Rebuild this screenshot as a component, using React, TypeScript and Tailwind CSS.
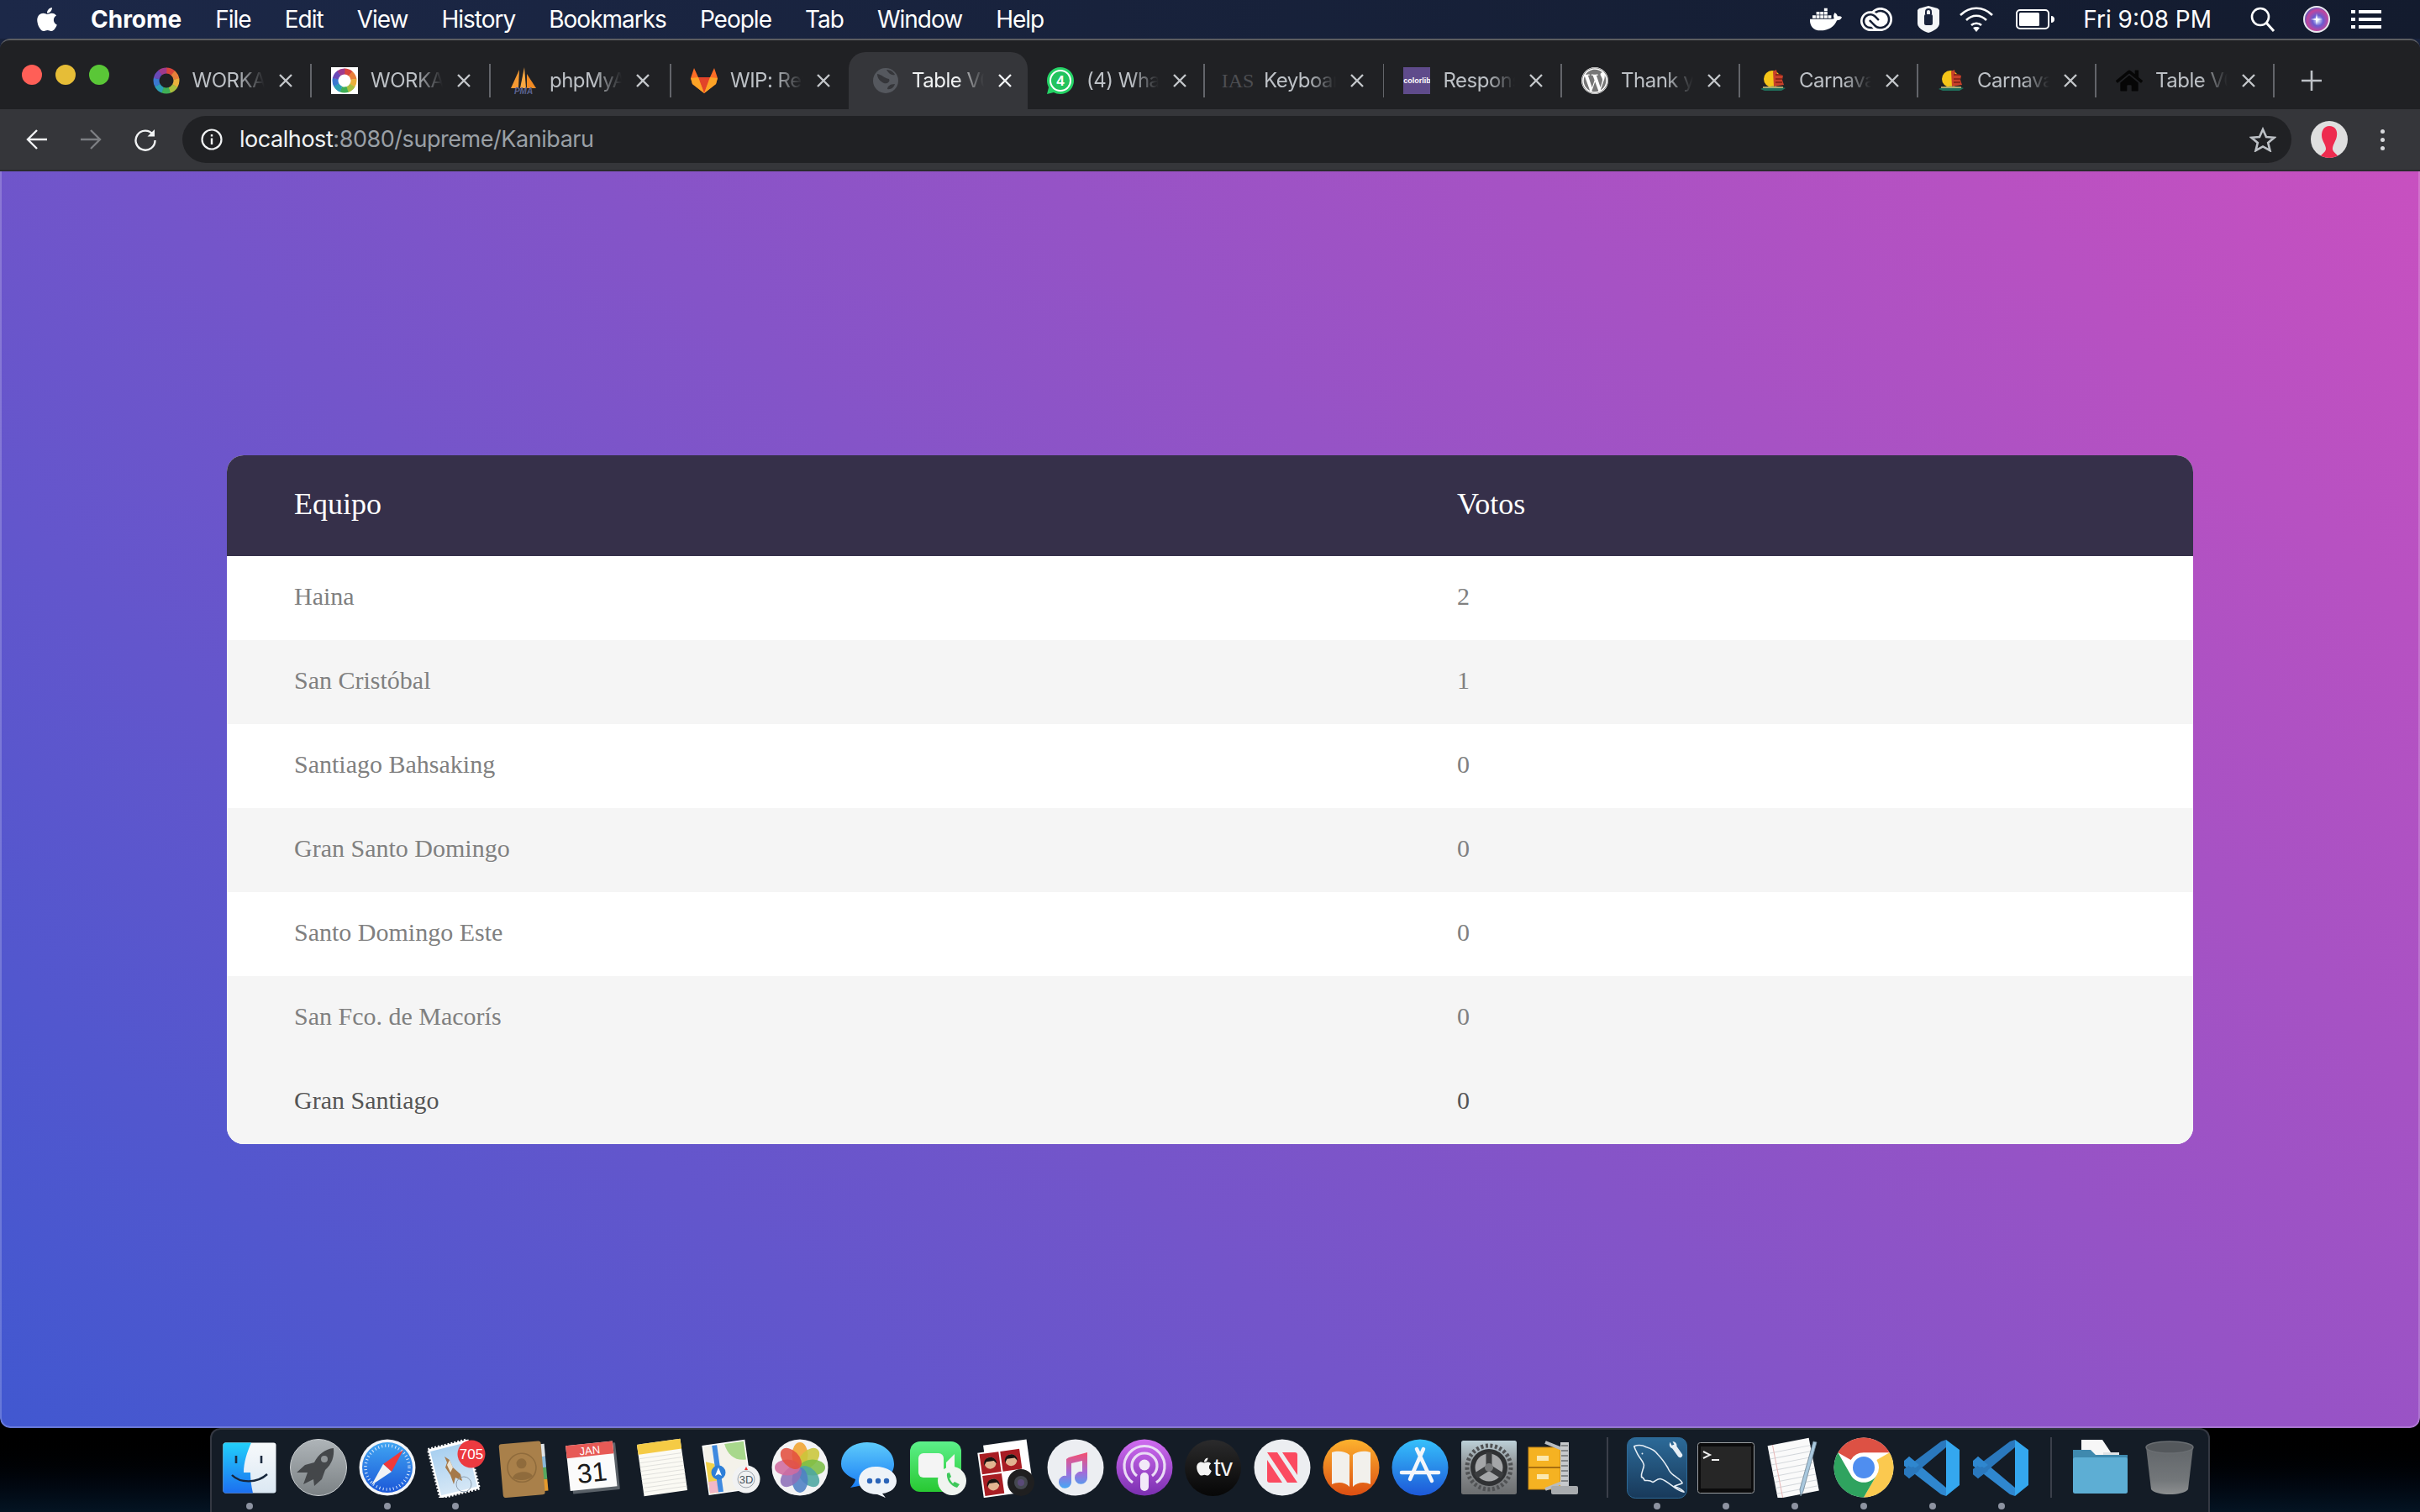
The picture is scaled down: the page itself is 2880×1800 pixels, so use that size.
import React from "react";
import { FaApple, FaDocker, FaHome, FaWordpress } from "react-icons/fa";
import { SiAdobecreativecloud } from "react-icons/si";

const rows: [string, string][] = [
  ["Haina", "2"],
  ["San Cristóbal", "1"],
  ["Santiago Bahsaking", "0"],
  ["Gran Santo Domingo", "0"],
  ["Santo Domingo Este", "0"],
  ["San Fco. de Macorís", "0"],
  ["Gran Santiago", "0"],
];

function Ring({ colors, r = 12, w = 7 }: { colors: string[]; r?: number; w?: number }) {
  const c = 2 * Math.PI * r;
  const seg = c / colors.length;
  return (
    <g transform="rotate(-90 16 16)">
      {colors.map((col, i) => (
        <circle key={i} cx="16" cy="16" r={r} fill="none" stroke={col} strokeWidth={w} strokeDasharray={`${seg + 0.4} ${c - seg - 0.4}`} strokeDashoffset={-seg * i} />
      ))}
    </g>
  );
}
const ringColors = ["#d9453a", "#e8803a", "#eab13c", "#a8bf3f", "#3fae55", "#2d9fb4", "#3a78d0", "#6a4ab8", "#a03a8c"];

function Fav({ n }: { n: number }) {
  const p = { width: 32, height: 32, viewBox: "0 0 32 32" };
  switch (n) {
    case 0:
      return <svg {...p}><Ring colors={ringColors} /></svg>;
    case 1:
      return <svg {...p}><rect width="32" height="32" fill="#fff" /><Ring colors={ringColors} r={11} w={7} /></svg>;
    case 2:
      return (
        <svg {...p}>
          <path d="M1 25 L11 3 L10 25 Z" fill="#f59a33" />
          <path d="M12 25 L17 0 L19 25 Z" fill="#f8a742" />
          <path d="M20 25 L20 8 L31 25 Z" fill="#f08a24" />
          <text x="16" y="32" textAnchor="middle" fontSize="10" fontWeight="700" fontStyle="italic" fill="#5b6391" fontFamily="Liberation Sans, sans-serif">PMA</text>
        </svg>
      );
    case 3:
      return (
        <svg {...p}>
          <path d="M16 31 L2 20 L0 13 L4 1 L9 12 L23 12 L28 1 L32 13 L30 20 Z" fill="#fc6d26" />
          <path d="M16 31 L9 12 L23 12 Z" fill="#e24329" />
          <path d="M16 31 L2 20 L0 13 L9 12 Z" fill="#fca326" />
          <path d="M16 31 L30 20 L32 13 L23 12 Z" fill="#fca326" />
        </svg>
      );
    case 4:
      return (
        <svg {...p}>
          <circle cx="16" cy="16" r="15" fill="#55585e" />
          <path d="M6 8 C12 9 14 13 20 14 C22 18 17 20 14 19 C10 17 6 14 6 8 Z M18 26 C18 23 21 20 27 20 C26 24 22 27 18 26 Z M17 3 C21 3 25 5 27 9 C23 10 20 8 17 3 Z" fill="#35363a" />
        </svg>
      );
    case 5:
      return (
        <svg {...p}>
          <path d="M16 0 C25 0 32 7 32 16 C32 25 25 32 16 32 C13 32 10 31 8 30 L0 32 L2 24 C1 22 0 19 0 16 C0 7 7 0 16 0 Z" fill="#25d366" />
          <circle cx="16" cy="16" r="13" fill="#fff" />
          <circle cx="16" cy="16" r="11" fill="#22c35e" />
          <text x="16" y="22" textAnchor="middle" fontSize="17" fontWeight="700" fill="#fff" fontFamily="Liberation Sans, sans-serif">4</text>
        </svg>
      );
    case 6:
      return <span className="font-['Liberation_Serif',serif] text-[24px] leading-8 text-[#4d4e52]">IAS</span>;
    case 7:
      return (
        <span className="flex h-8 w-8 items-center justify-center overflow-hidden bg-[#5f4b8b] font-['Liberation_Sans',sans-serif] text-[9px] font-bold leading-none text-white">colorlib</span>
      );
    case 8:
      return (
        <span className="flex h-8 w-8 items-center justify-center rounded-full bg-white">
          <FaWordpress size={32} color="#777" />
        </span>
      );
    case 9:
    case 10:
      return (
        <svg {...p}>
          <circle cx="15" cy="14" r="10" fill="#f5c518" />
          <path d="M16 5 L20 3 L21 8 L28 10 L27 15 L29 21 L17 23 Z" fill="#c8402a" />
          <path d="M19 9 h7 M19 14 h8 M19 18 h8" stroke="#7a2015" strokeWidth="1.6" />
          <path d="M1 26 C8 22 24 22 31 25 L26 28 L6 28 Z" fill="#1f6d5a" />
          <path d="M4 24 L28 24" stroke="#d8c27a" strokeWidth="1.5" />
        </svg>
      );
    default:
      return <FaHome size={32} color="#060606" />;
  }
}

const tabs = ["WORKAREA", "WORKAREA", "phpMyAdmin", "WIP: Refactor", "Table V01", "(4) WhatsApp", "Keyboard", "Responsive", "Thank you", "Carnaval", "Carnaval", "Table V01"];
const tabWidths = [212.4, 213, 215, 211, 213, 211, 213.5, 211.5, 212, 212, 212, 212];

function CloseX({ active }: { active: boolean }) {
  return (
    <svg width="18" height="18" viewBox="0 0 18 18" className="shrink-0">
      <path d="M2 2 L16 16 M16 2 L2 16" stroke={active ? "#f1f3f4" : "#c4c7cb"} strokeWidth="2.4" />
    </svg>
  );
}

function Tab({ i }: { i: number }) {
  const active = i === 4;
  const hideSep = i === 3 || i === 4;
  return (
    <div style={{ width: tabWidths[i] }} className={`flex h-full shrink-0 items-center ${active ? "rounded-t-[20px] bg-[#35363a]" : ""}`}>
      <div className={`flex items-center ${active ? "pl-[28px]" : "pl-[23px]"}`}>
        <div className="flex h-8 w-8 shrink-0 items-center justify-center">
          <Fav n={i} />
        </div>
        <div className={`ml-[15px] w-[86px] overflow-hidden whitespace-nowrap text-[24px] leading-8 tracking-[-0.5px] [mask-image:linear-gradient(to_right,#000_62%,transparent_100%)] ${active ? "text-[#f1f3f4]" : "text-[#bdc1c6]"}`}>
          {tabs[i]}
        </div>
        <div className="ml-[16px]">
          <CloseX active={active} />
        </div>
      </div>
      <div className={`ml-auto h-10 w-[1.5px] shrink-0 ${hideSep ? "" : "bg-[#63656a]"}`} />
    </div>
  );
}

function MenuIcons() {
  return (
    <div className="flex items-center">
      <FaDocker size={38} color="#fff" />
      <span className="ml-[22px] flex"><SiAdobecreativecloud size={38} color="#fff" /></span>
      <svg className="ml-[28px]" width="30" height="34" viewBox="0 0 30 34">
        <path d="M15 1 L26 4 L28 6 V22 C28 27 21 31 15 33 C9 31 2 27 2 22 V6 L4 4 Z" fill="#f4f6f8" />
        <rect x="10" y="11" width="10" height="13" rx="2" fill="#19233b" />
        <path d="M12 11 V8 a3 3 0 0 1 6 0 V11" stroke="#19233b" strokeWidth="2" fill="none" />
      </svg>
      <svg className="ml-[21px]" width="42" height="30" viewBox="0 0 42 30">
        <path d="M2 10 C13 -1 29 -1 40 10 M9 16 C16 9 26 9 33 16 M15 22 C18 19 24 19 27 22" stroke="#fff" strokeWidth="2.6" fill="none" />
        <path d="M21 30 L17 25 C19 23.5 23 23.5 25 25 Z" fill="#fff" />
      </svg>
      <svg className="ml-[26px]" width="46" height="24" viewBox="0 0 46 24">
        <rect x="1" y="1" width="38" height="22" rx="4" fill="none" stroke="#fff" strokeWidth="2" />
        <rect x="4" y="4" width="24" height="16" rx="1.5" fill="#fff" />
        <path d="M42 8 C45 8 46 10 46 12 C46 14 45 16 42 16 Z" fill="#fff" />
      </svg>
      <span className="ml-[34px] text-[28px] leading-none text-white">Fri 9:08 PM</span>
      <svg className="ml-[46px]" width="30" height="30" viewBox="0 0 30 30">
        <circle cx="12" cy="12" r="10" fill="none" stroke="#fff" strokeWidth="2.6" />
        <path d="M19 19 L28 29" stroke="#fff" strokeWidth="3" />
      </svg>
      <svg className="ml-[33px]" width="32" height="32" viewBox="0 0 32 32">
        <defs>
          <radialGradient id="siri" cx="0.55" cy="0.55" r="0.6">
            <stop offset="0" stopColor="#e0f2ff" /><stop offset="0.35" stopColor="#6a5bd0" /><stop offset="0.7" stopColor="#c2459c" /><stop offset="1" stopColor="#2a5fc8" />
          </radialGradient>
        </defs>
        <circle cx="16" cy="16" r="15" fill="url(#siri)" stroke="#e8e8ee" strokeWidth="2" />
        <path d="M16 9 L17 15 L23 16 L17 17 L16 23 L15 17 L9 16 L15 15 Z" fill="#fff" />
      </svg>
      <svg className="ml-[25px]" width="36" height="22" viewBox="0 0 36 22">
        <path d="M0 0h5v4H0zM9 0h27v4H9zM0 9h5v4H0zM9 9h27v4H9zM0 18h5v4H0zM9 18h27v4H9z" fill="#fff" />
      </svg>
    </div>
  );
}

function Toolbar() {
  return (
    <div className="flex h-[74px] shrink-0 items-center border-b-2 border-[#2a2b2e] bg-[#35363a]">
      <div className="ml-[31px] flex w-[186px] items-center">
        <svg width="26" height="26" viewBox="0 0 26 26">
          <path d="M25 13 H3 M13 2 L2 13 L13 24" stroke="#f1f3f4" strokeWidth="2.4" fill="none" />
        </svg>
        <svg className="ml-[38px]" width="26" height="26" viewBox="0 0 26 26">
          <path d="M1 13 H23 M13 2 L24 13 L13 24" stroke="#7c7e82" strokeWidth="2.4" fill="none" />
        </svg>
        <svg className="ml-[38px]" width="28" height="28" viewBox="0 0 28 28">
          <path d="M23 8 A11.5 11.5 0 1 0 25.5 15" stroke="#f1f3f4" strokeWidth="2.4" fill="none" />
          <path d="M25 2 V10.5 H16.5 Z" fill="#f1f3f4" />
        </svg>
      </div>
      <div className="flex h-14 w-[2510px] items-center rounded-full bg-[#202124]">
        <svg className="ml-[22px]" width="26" height="26" viewBox="0 0 26 26">
          <circle cx="13" cy="13" r="11.5" fill="none" stroke="#f1f3f4" strokeWidth="2.2" />
          <path d="M13 11.5 V19 M13 7 V9.5" stroke="#f1f3f4" strokeWidth="2.4" />
        </svg>
        <span className="ml-[20px] mb-[1px] text-[27px] leading-none tracking-[-0.45px] text-[#f1f3f4]">
          localhost<span className="text-[#9aa0a6]">:8080/supreme/Kanibaru</span>
        </span>
        <svg className="ml-auto mr-[18px]" width="32" height="30" viewBox="0 0 32 30">
          <path d="M16 3 L20 12 L29.5 12.8 L22.2 19 L24.5 28.2 L16 23.4 L7.5 28.2 L9.8 19 L2.5 12.8 L12 12 Z" fill="none" stroke="#bdc1c6" strokeWidth="2.6" />
        </svg>
      </div>
      <div className="ml-[23px] flex h-11 w-11 items-center justify-center overflow-hidden rounded-full bg-[#dfdfdf]">
        <svg width="44" height="44" viewBox="0 0 44 44">
          <path d="M22 6 C29 6 32 11 31 18 C30 24 26 28 26 33 C26 37 30 38 34 44 H10 C14 38 18 37 18 33 C18 28 13 24 13 17 C13 11 16 6 22 6 Z" fill="#ee2b4f" />
        </svg>
      </div>
      <div className="ml-[39px] flex flex-col gap-[5px]">
        <span className="h-[5px] w-[5px] rounded-full bg-[#d7d9dc]" />
        <span className="h-[5px] w-[5px] rounded-full bg-[#d7d9dc]" />
        <span className="h-[5px] w-[5px] rounded-full bg-[#d7d9dc]" />
      </div>
    </div>
  );
}

function Icon({ id }: { id: string }) {
  const p = { width: 72, height: 72, viewBox: "0 0 72 72" };
  const sans = "Liberation Sans, sans-serif";
  switch (id) {
    case "finder":
      return (
        <svg {...p}>
          <defs>
            <linearGradient id="fa" x1="0" y1="0" x2="0" y2="1"><stop offset="0" stopColor="#22d0fb" /><stop offset="1" stopColor="#1c6ff0" /></linearGradient>
            <linearGradient id="fb" x1="0" y1="0" x2="0" y2="1"><stop offset="0" stopColor="#f7f9fb" /><stop offset="1" stopColor="#dbe8f3" /></linearGradient>
          </defs>
          <rect x="4.5" y="6.5" width="63" height="60" rx="3" fill="url(#fb)" />
          <path d="M7.5 6.5 H38 C33 18 29 30 29 42 H37 C37 50 38 58 40 66.5 H7.5 A3 3 0 0 1 4.5 63.5 V9.5 A3 3 0 0 1 7.5 6.5 Z" fill="url(#fa)" />
          <path d="M20 22 v9 M50 22 v9" stroke="#1c2b40" strokeWidth="2.6" />
          <path d="M15 45 C25 55 45 55 57 44" stroke="#16263c" strokeWidth="2.4" fill="none" />
        </svg>
      );
    case "launchpad":
      return (
        <svg {...p}>
          <defs><linearGradient id="lp" x1="0" y1="0" x2="0" y2="1"><stop offset="0" stopColor="#aeb4b8" /><stop offset="1" stopColor="#7c8285" /></linearGradient></defs>
          <circle cx="36" cy="36" r="33.5" fill="url(#lp)" stroke="#c9cdd0" strokeWidth="1" />
          <path d="M54 13 C44 14 36 20 31 30 L20 33 L10 42 L23 42 L18 56 L30 50 L31 58 L40 50 L44 39 C52 32 55 23 54 13 Z" fill="#44474a" />
          <circle cx="43" cy="26" r="4" fill="#8f9497" />
        </svg>
      );
    case "safari":
      return (
        <svg {...p}>
          <defs><linearGradient id="sf" x1="0" y1="0" x2="0" y2="1"><stop offset="0" stopColor="#3fa4f2" /><stop offset="1" stopColor="#1c58d8" /></linearGradient></defs>
          <circle cx="36" cy="36" r="33.5" fill="#f2f4f6" />
          <circle cx="36" cy="36" r="30" fill="url(#sf)" />
          <circle cx="36" cy="36" r="26" fill="none" stroke="#dbe9fb" strokeWidth="3.5" strokeDasharray="1 3.1" />
          <path d="M55 15 L31 32 L41 41 Z" fill="#f0393a" />
          <path d="M17 57 L31 32 L41 41 Z" fill="#f1f3f5" />
        </svg>
      );
    case "mail":
      return (
        <svg {...p}>
          <defs><linearGradient id="ml" x1="0" y1="0" x2="0" y2="1"><stop offset="0" stopColor="#a9d0f0" /><stop offset="1" stopColor="#d5e7f6" /></linearGradient></defs>
          <g transform="rotate(-14 33 38)">
            <rect x="10" y="8" width="48" height="60" fill="#fff" stroke="#fff" strokeWidth="3" strokeDasharray="2 2" />
            <rect x="12" y="11" width="44" height="54" fill="url(#ml)" />
          </g>
          <path d="M23 23 L29 27 L33 36 L42 44 L44 52 L36 48 L34 56 L30 45 L24 36 L26 30 Z" fill="#a5794a" />
          <path d="M29 27 L33 36 L30 42 L26 33 Z" fill="#ece3d2" />
          <circle cx="46" cy="56" r="9" fill="none" stroke="#8e9fb0" strokeWidth="1" />
          <circle cx="55" cy="20" r="16.5" fill="#ec3a40" />
          <text x="55" y="26" textAnchor="middle" fontSize="17" fill="#fff" fontFamily={sans}>705</text>
        </svg>
      );
    case "contacts":
      return (
        <svg {...p}>
          <g transform="rotate(-5 36 36)">
            <rect x="54" y="10" width="8" height="15" fill="#dfe3e6" />
            <rect x="54" y="25" width="8" height="13" fill="#8ab8d8" />
            <rect x="54" y="38" width="8" height="14" fill="#55a860" />
            <rect x="54" y="52" width="8" height="14" fill="#e69a2c" />
            <rect x="8" y="6" width="50" height="64" rx="3" fill="#a9804a" />
            <circle cx="33" cy="36" r="17" fill="none" stroke="#8f6b3c" strokeWidth="1.6" />
            <circle cx="33" cy="31" r="6" fill="#8f6b3c" />
            <path d="M21 47 C24 39 42 39 45 47 C40 52 26 52 21 47 Z" fill="#8f6b3c" />
          </g>
        </svg>
      );
    case "calendar":
      return (
        <svg {...p}>
          <g transform="rotate(-6 36 36)">
            <rect x="9" y="9" width="56" height="56" rx="1" fill="#5a6168" />
            <rect x="6" y="7" width="56" height="54" fill="#fbfbfb" />
            <rect x="6" y="7" width="56" height="15" fill="#e75a56" />
            <text x="34" y="20" textAnchor="middle" fontSize="13" fill="#fff" fontFamily={sans}>JAN</text>
            <text x="34" y="53" textAnchor="middle" fontSize="32" fill="#1a1a1a" fontFamily={sans}>31</text>
          </g>
        </svg>
      );
    case "notes":
      return (
        <svg {...p}>
          <g transform="rotate(-8 36 36)">
            <rect x="10" y="5" width="52" height="62" fill="#fbfaf4" />
            <rect x="10" y="5" width="52" height="12" fill="#f5cb45" />
            <path d="M10 22h52M10 27h52M10 32h52M10 37h52M10 42h52M10 47h52M10 52h52M10 57h52M10 62h52" stroke="#dcdcd8" strokeWidth="0.8" />
          </g>
        </svg>
      );
    case "maps":
      return (
        <svg {...p}>
          <g transform="rotate(-8 30 36)">
            <rect x="6" y="7" width="50" height="58" fill="#f4f2ea" stroke="#fff" strokeWidth="1.5" />
            <path d="M32 8 H55 V30 C42 30 34 22 32 8 Z" fill="#a8d88c" />
            <path d="M7 26 L17 30 V64 H7 Z" fill="#f2d24a" />
            <path d="M7 50 L17 50 V64 H7 Z" fill="#f2b8c8" />
            <rect x="17" y="8" width="6" height="56" fill="#3f8ae0" />
          </g>
          <circle cx="21" cy="42" r="8.5" fill="#2e7fd8" />
          <path d="M21 36 L25 46 L21 44 L17 46 Z" fill="#fff" />
          <circle cx="54" cy="50" r="16.5" fill="#f1f2f3" />
          <circle cx="54" cy="50" r="10" fill="none" stroke="#9ba3ab" strokeWidth="1" />
          <text x="54" y="55" textAnchor="middle" fontSize="13" fill="#4a5560" fontFamily={sans}>3D</text>
          <path d="M54 35 L56 39 H52 Z" fill="#e33" />
        </svg>
      );
    case "photos": {
      const cs = ["#f0a32f", "#c9c63a", "#7bbd45", "#4ca6a0", "#4f7fc4", "#8d6fb8", "#cf6b9f", "#e2503f"];
      return (
        <svg {...p}>
          <circle cx="36" cy="36" r="33.5" fill="#f3f3f4" />
          {cs.map((c, i) => (
            <ellipse key={i} cx="36" cy="21" rx="9.5" ry="15" fill={c} opacity="0.88" transform={`rotate(${i * 45} 36 36)`} />
          ))}
        </svg>
      );
    }
    case "messages":
      return (
        <svg {...p}>
          <defs><linearGradient id="ms" x1="0" y1="0" x2="0" y2="1"><stop offset="0" stopColor="#5ecbfb" /><stop offset="1" stopColor="#1a7ef5" /></linearGradient></defs>
          <path d="M34 6 C52 6 66 17 66 32 C66 44 56 52 42 54 L14 60 C18 56 20 52 20 50 C10 46 3 40 3 32 C3 17 16 6 34 6 Z" fill="url(#ms)" />
          <path d="M44 35 C58 35 69 42 69 52 C69 60 62 66 52 67 L56 72 L46 68 C33 68 24 61 24 52 C24 42 32 35 44 35 Z" fill="#eef3f8" />
          <circle cx="37" cy="52" r="3.2" fill="#2b64b8" /><circle cx="47" cy="52" r="3.2" fill="#2b64b8" /><circle cx="57" cy="52" r="3.2" fill="#2b64b8" />
        </svg>
      );
    case "facetime":
      return (
        <svg {...p}>
          <defs><linearGradient id="ft" x1="0" y1="0" x2="0" y2="1"><stop offset="0" stopColor="#5cf08a" /><stop offset="1" stopColor="#28c832" /></linearGradient></defs>
          <rect x="3" y="5" width="61" height="60" rx="12" fill="url(#ft)" />
          <rect x="13" y="19" width="30" height="29" rx="6" fill="#f4f4f4" />
          <path d="M46 30 L56 20 V47 L46 38 Z" fill="#f4f4f4" />
          <circle cx="53" cy="52" r="17" fill="#f0f4f0" />
          <path d="M47 43 C46 50 51 58 59 60 L62 56 L56 53 L54 55 C52 53 51 51 50 49 L52 47 L50 42 Z" fill="#3dc85a" />
        </svg>
      );
    case "photobooth":
      return (
        <svg {...p}>
          <g transform="rotate(-8 36 36)">
            <rect x="12" y="6" width="52" height="46" fill="#fff" />
            <rect x="4" y="14" width="52" height="54" fill="#fff" />
            {[[6, 16], [31, 16], [6, 42]].map(([x, y], i) => (
              <g key={i}>
                <rect x={x} y={y} width="23" height="24" fill="#a91d23" />
                <circle cx={x + 11.5} cy={y + 12} r="7" fill="#e2b491" />
                <path d={`M${x + 4} ${y + 14} C${x + 3} ${y + 2} ${x + 20} ${y + 2} ${x + 19} ${y + 14} L${x + 16} ${y + 10} L${x + 7} ${y + 10} Z`} fill="#1a1210" />
              </g>
            ))}
          </g>
          <circle cx="53" cy="54" r="16" fill="#1f1f20" />
          <circle cx="53" cy="54" r="8" fill="#454850" />
          <circle cx="53" cy="54" r="4" fill="#5a4a78" />
        </svg>
      );
    case "music":
      return (
        <svg {...p}>
          <defs><linearGradient id="mu" x1="0" y1="0" x2="0" y2="1"><stop offset="0" stopColor="#f64f6e" /><stop offset="0.55" stopColor="#a36bd8" /><stop offset="1" stopColor="#45a8f5" /></linearGradient></defs>
          <circle cx="36" cy="36" r="33.5" fill="#eceef2" />
          <path d="M28 24 L50 18 V48 A7.5 7.5 0 1 1 44 41 V28 L31 31 V53 A7.5 7.5 0 1 1 25 46 V26 Z" fill="url(#mu)" />
        </svg>
      );
    case "podcasts":
      return (
        <svg {...p}>
          <defs><linearGradient id="pd" x1="0" y1="0" x2="0" y2="1"><stop offset="0" stopColor="#d06cf0" /><stop offset="1" stopColor="#7a2fb0" /></linearGradient></defs>
          <circle cx="36" cy="36" r="33.5" fill="url(#pd)" />
          <path d="M22 54 A24 24 0 1 1 50 54 M27 46 A15 15 0 1 1 45 46" stroke="#eadcf5" strokeWidth="3.2" fill="none" />
          <circle cx="36" cy="33" r="6.5" fill="#f2e9f8" />
          <rect x="31" y="42" width="10" height="22" rx="5" fill="#f2e9f8" />
        </svg>
      );
    case "tv":
      return (
        <span className="flex h-[72px] w-[72px] items-center justify-center">
          <span className="flex h-[67px] w-[67px] items-center justify-center rounded-full bg-gradient-to-b from-[#2b2b2c] to-[#070707]">
            <FaApple size={24} color="#f4f4f4" className="mb-[2px]" />
            <span className="font-['Liberation_Sans',sans-serif] text-[29px] leading-none text-[#f4f4f4]">tv</span>
          </span>
        </span>
      );
    case "news":
      return (
        <svg {...p}>
          <circle cx="36" cy="36" r="33.5" fill="#eceef1" />
          <path d="M18 18 H30 L54 54 H42 Z" fill="#fb4a60" />
          <path d="M36 18 H51 A3 3 0 0 1 54 21 V45 Z" fill="#fb4a60" />
          <path d="M18 27 L36 54 H21 A3 3 0 0 1 18 51 Z" fill="#fb4a60" />
        </svg>
      );
    case "books":
      return (
        <svg {...p}>
          <defs><linearGradient id="bk" x1="0" y1="0" x2="0" y2="1"><stop offset="0" stopColor="#fdb22e" /><stop offset="1" stopColor="#dc4e12" /></linearGradient></defs>
          <circle cx="36" cy="36" r="33.5" fill="url(#bk)" />
          <path d="M34 21 C28 16 19 16 13 18 V56 C19 53 29 53 34 59 Z M38 21 C44 16 53 16 59 18 V56 C53 53 43 53 38 59 Z" fill="#f2f0ec" />
        </svg>
      );
    case "appstore":
      return (
        <svg {...p}>
          <defs><linearGradient id="as" x1="0" y1="0" x2="0" y2="1"><stop offset="0" stopColor="#36c0fb" /><stop offset="1" stopColor="#1d58d8" /></linearGradient></defs>
          <circle cx="36" cy="36" r="33.5" fill="url(#as)" />
          <path d="M40 14 L24 50 M32 14 L50 52" stroke="#f3f6fb" strokeWidth="4.5" strokeLinecap="round" />
          <path d="M14 42 H58" stroke="#f3f6fb" strokeWidth="4.5" strokeLinecap="round" />
        </svg>
      );
    case "prefs":
      return (
        <svg {...p}>
          <defs><linearGradient id="pr" x1="0" y1="0" x2="0" y2="1"><stop offset="0" stopColor="#bcd0d8" /><stop offset="0.45" stopColor="#8f9396" /><stop offset="1" stopColor="#6c6e70" /></linearGradient></defs>
          <rect x="3" y="4" width="66" height="64" rx="2.5" fill="url(#pr)" />
          <circle cx="36" cy="36" r="26" fill="none" stroke="#505254" strokeWidth="5" strokeDasharray="3 2.6" />
          <circle cx="36" cy="36" r="22" fill="#2f3133" />
          <circle cx="36" cy="36" r="16.5" fill="#a4a6a8" />
          <path d="M36 36 V18 M36 36 L20 46 M36 36 L52 46" stroke="#3b3d3f" strokeWidth="7" />
          <circle cx="36" cy="36" r="5" fill="#77797b" />
        </svg>
      );
    case "archive":
      return (
        <svg {...p}>
          <rect x="2" y="12" width="38" height="50" fill="#f5b222" stroke="#c68412" />
          <path d="M2 36 H40" stroke="#a86e10" strokeWidth="2" />
          <rect x="12" y="22" width="14" height="6" fill="#fbe8b0" />
          <rect x="12" y="44" width="14" height="6" fill="#fbe8b0" />
          <path d="M22 6 L42 14 V54 L22 62" stroke="#b8bcc0" strokeWidth="4" fill="none" />
          <rect x="40" y="6" width="10" height="56" fill="#c6c9cc" />
          <path d="M41 10h8M41 16h8M41 22h8M41 28h8M41 34h8M41 40h8M41 46h8M41 52h8" stroke="#6e7174" strokeWidth="1.5" />
          <rect x="29" y="58" width="32" height="10" rx="2" fill="#a8abae" />
        </svg>
      );
    case "mysql":
      return (
        <svg width="74" height="75" viewBox="0 0 74 75">
          <defs><linearGradient id="my" x1="0" y1="0" x2="0" y2="1"><stop offset="0" stopColor="#2c6a98" /><stop offset="1" stopColor="#18395a" /></linearGradient></defs>
          <rect x="0.5" y="0.5" width="73" height="74" rx="10" fill="url(#my)" stroke="#2d6c9a" />
          <path d="M9 11 C14 9 20 10 24 12 C31 14 36 18 38 21 C44 27 47 32 50 37 C52 42 55 45 58 47 C62 50 66 52 68 56 C65 58 61 58 58 60 C62 62 67 63 70 67 C65 66 60 63 55 59 C50 55 46 52 42 51 C38 50 36 53 32 55 C28 52 26 53 22 53 C20 49 18 48 18 49 C17 43 21 39 21 34 C20 29 16 26 14 22 C12 18 10 15 9 11 Z" fill="none" stroke="#e6eef5" strokeWidth="1.6" strokeLinejoin="round" />
          <circle cx="19" cy="20" r="1" fill="#e6eef5" />
          <path d="M53 6 C51 10 53 13 56 14 L63 24 C65 26 69 24 68 21 L61 11 C62 8 59 5 56 5 L58 9 L55 10 Z" fill="#e6eef5" />
        </svg>
      );
    case "terminal":
      return (
        <svg {...p}>
          <rect x="2.5" y="6.5" width="67" height="60" rx="3" fill="#0b0b0c" stroke="#9a9da0" strokeWidth="1" />
          <rect x="6" y="11" width="60" height="50" fill="#262626" />
          <path d="M9 17 L17 21 L9 25" stroke="#f2f2f2" strokeWidth="2" fill="none" />
          <path d="M19 27 H28" stroke="#f2f2f2" strokeWidth="2" />
        </svg>
      );
    case "textedit":
      return (
        <svg {...p}>
          <g transform="rotate(-11 34 36)">
            <rect x="9" y="5" width="50" height="64" fill="#fafafa" />
            <path d="M9 14h50M9 21h50M9 28h50M9 35h50M9 42h50M9 49h50M9 56h50M9 63h50" stroke="#d2d6da" strokeWidth="1" />
            <path d="M15 5 V69" stroke="#e8b8b8" strokeWidth="1" />
          </g>
          <path d="M58 5 L62 6 L46 64 L43 70 L42 62 Z" fill="#a9c8de" stroke="#6e8494" strokeWidth="0.8" />
        </svg>
      );
    case "chrome":
      return (
        <svg {...p}>
          <circle cx="36" cy="36" r="35.5" fill="#fff" />
          <path d="M36 .5 A35.5 35.5 0 0 1 66.7 18.2 H36 A17.8 17.8 0 0 0 20.6 27 L5.3 18.2 A35.5 35.5 0 0 1 36 .5 Z" fill="#dd5144" />
          <path d="M66.7 18.2 A35.5 35.5 0 0 1 36 71.5 L51.4 45 A17.8 17.8 0 0 0 51.4 27 Z" fill="#fbc94f" />
          <path d="M36 71.5 A35.5 35.5 0 0 1 5.3 18.2 L20.6 45 A17.8 17.8 0 0 0 51.4 45 L36 71.5 Z" fill="#2fa35f" />
          <circle cx="36" cy="36" r="16.5" fill="#fff" />
          <circle cx="36" cy="36" r="13" fill="#4f8ef0" />
        </svg>
      );
    case "vscode":
      return (
        <svg {...p}>
          <path d="M2 28 L8 23 L52 60 L52 70 L46 68 L2 34 Z" fill="#2f87cf" />
          <path d="M2 44 L8 49 L52 12 L52 3 L46 5 L2 38 Z" fill="#2a78bd" />
          <path d="M52 3 L68 15 V57 L52 70 Z" fill="#34a7ef" />
          <path d="M8 23 L20 33 L13 38 L2 30 Z" fill="#2f87cf" />
          <path d="M2 38 L13 35 L20 40 L8 49 L2 44 Z" fill="#2a78bd" />
        </svg>
      );
    case "folder":
      return (
        <svg {...p}>
          <path d="M13 3 H38 L52 24 H13 Z" fill="#f7f7f7" />
          <path d="M39 18 H58 V26 H39 Z" fill="#dfe3e6" />
          <path d="M3 15 H24 L30 21 H68 V28 H3 Z" fill="#3f89ae" />
          <rect x="3" y="24" width="65" height="43" rx="2.5" fill="#5daed4" />
        </svg>
      );
    default:
      return (
        <svg {...p}>
          <defs><linearGradient id="tr" x1="0" y1="0" x2="0" y2="1"><stop offset="0" stopColor="#62666a" /><stop offset="0.7" stopColor="#73777a" /><stop offset="1" stopColor="#8c8f90" /></linearGradient></defs>
          <path d="M8 12 L14 62 C20 70 52 70 58 62 L64 12 Z" fill="url(#tr)" />
          <ellipse cx="36" cy="12" rx="28" ry="7" fill="#54585c" stroke="#6a6e72" strokeWidth="1.5" />
        </svg>
      );
  }
}

const dockA: [string, boolean][] = [
  ["finder", true], ["launchpad", false], ["safari", true], ["mail", true], ["contacts", false], ["calendar", false], ["notes", false], ["maps", false], ["photos", false], ["messages", false], ["facetime", false], ["photobooth", false], ["music", false], ["podcasts", false], ["tv", false], ["news", false], ["books", false], ["appstore", false], ["prefs", false], ["archive", false],
];
const dockB: [string, boolean][] = [
  ["mysql", true], ["terminal", true], ["textedit", true], ["chrome", true], ["vscode", true], ["vscode", true],
];
const dockC: [string, boolean][] = [["folder", false], ["trash", false]];

function DockItem({ id, dot }: { id: string; dot: boolean }) {
  return (
    <div className="flex w-[81.95px] shrink-0 flex-col items-center">
      <div className="flex h-[72px] w-[72px] items-center justify-center">
        <Icon id={id} />
      </div>
      <span className={`mt-[6px] h-2 w-2 rounded-full ${dot ? "bg-[#8d93a1]" : ""}`} />
    </div>
  );
}
function DockSep() {
  return (
    <div className="flex h-[72px] w-[36.6px] shrink-0 justify-center">
      <span className="h-[72px] w-[2px] bg-[#3a3f4a]" />
    </div>
  );
}

export default function App() {
  return (
    <div className="flex h-[1800px] w-[2880px] flex-col overflow-hidden bg-[linear-gradient(to_bottom,#18223c_0,#18223c_60px,#000_60px)] font-['Inter',sans-serif]">
      <div className="flex h-[46px] shrink-0 items-center justify-between bg-gradient-to-r from-[#1c2848] to-[#131b2e] pl-[40px] pr-[46px] text-[28px] leading-none text-white">
        <div className="flex items-center gap-[40px] tracking-[-1px]">
          <FaApple size={32} color="#fff" className="mr-[-4px]" />
          <span className="font-bold tracking-normal">Chrome</span>
          <span>File</span>
          <span>Edit</span>
          <span>View</span>
          <span>History</span>
          <span>Bookmarks</span>
          <span>People</span>
          <span>Tab</span>
          <span>Window</span>
          <span>Help</span>
        </div>
        <MenuIcons />
      </div>
      <div className="flex h-[1654px] shrink-0 flex-col overflow-hidden rounded-[12px] border-t-2 border-[#5c5d60]">
        <div className="flex h-[82px] shrink-0 items-end bg-[#202124]">
          <div className="flex h-[68px] items-stretch">
            <div className="flex w-[158.6px] shrink-0 items-start gap-4 pl-[26px] pt-[15px]">
              <span className="h-6 w-6 rounded-full bg-[#ff5f57]" />
              <span className="h-6 w-6 rounded-full bg-[#e6bd37]" />
              <span className="h-6 w-6 rounded-full bg-[#5ac737]" />
            </div>
            {tabs.map((_, i) => <Tab key={i} i={i} />)}
            <div className="flex w-[88px] items-center justify-center">
              <svg width="24" height="24" viewBox="0 0 24 24">
                <path d="M12 0 V24 M0 12 H24" stroke="#bdc1c6" strokeWidth="2.6" />
              </svg>
            </div>
          </div>
        </div>
        <Toolbar />
        <div className="flex min-h-0 flex-1 items-center justify-center rounded-b-[12px] border-x-2 border-b-2 border-white/20 bg-[linear-gradient(45deg,#4158d0,#c850c0)] bg-origin-border pt-[2px]">
          <div className="w-[2340px] overflow-hidden rounded-[20px] bg-white font-['Liberation_Serif',serif]">
            <table className="w-full table-fixed border-collapse">
              <colgroup>
                <col className="w-[1464px]" />
                <col />
              </colgroup>
              <thead>
                <tr className="h-[120px] bg-[#36304a] text-left text-[36px] font-normal text-white">
                  <th className="pb-[4px] pl-[80px] font-normal">Equipo</th>
                  <th className="pb-[4px] font-normal">Votos</th>
                </tr>
              </thead>
              <tbody>
                {rows.map(([a, b], i) => (
                  <tr key={a} className={`h-[100px] text-[30px] ${i === 6 ? "bg-[#f5f5f5] text-[#555555]" : i % 2 === 1 ? "bg-[#f5f5f5] text-[#808080]" : "bg-white text-[#808080]"}`}>
                    <td className="pb-[6px] pl-[80px]">{a}</td>
                    <td className="pb-[6px]">{b}</td>
                  </tr>
                ))}
              </tbody>
            </table>
          </div>
        </div>
      </div>
      <div className="flex flex-1 bg-gradient-to-b from-[#000000] to-[#041423] pl-[250px]">
        <div className="flex h-[100px] w-[2380px] items-start rounded-t-[12px] border-x-2 border-t-2 border-[#343842] bg-[#141c26] pl-[3.7px] pt-[9px]">
          {dockA.map(([id, d], i) => <DockItem key={i} id={id} dot={d} />)}
          <DockSep />
          {dockB.map(([id, d], i) => <DockItem key={i} id={id} dot={d} />)}
          <DockSep />
          {dockC.map(([id, d], i) => <DockItem key={i} id={id} dot={d} />)}
        </div>
      </div>
    </div>
  );
}
